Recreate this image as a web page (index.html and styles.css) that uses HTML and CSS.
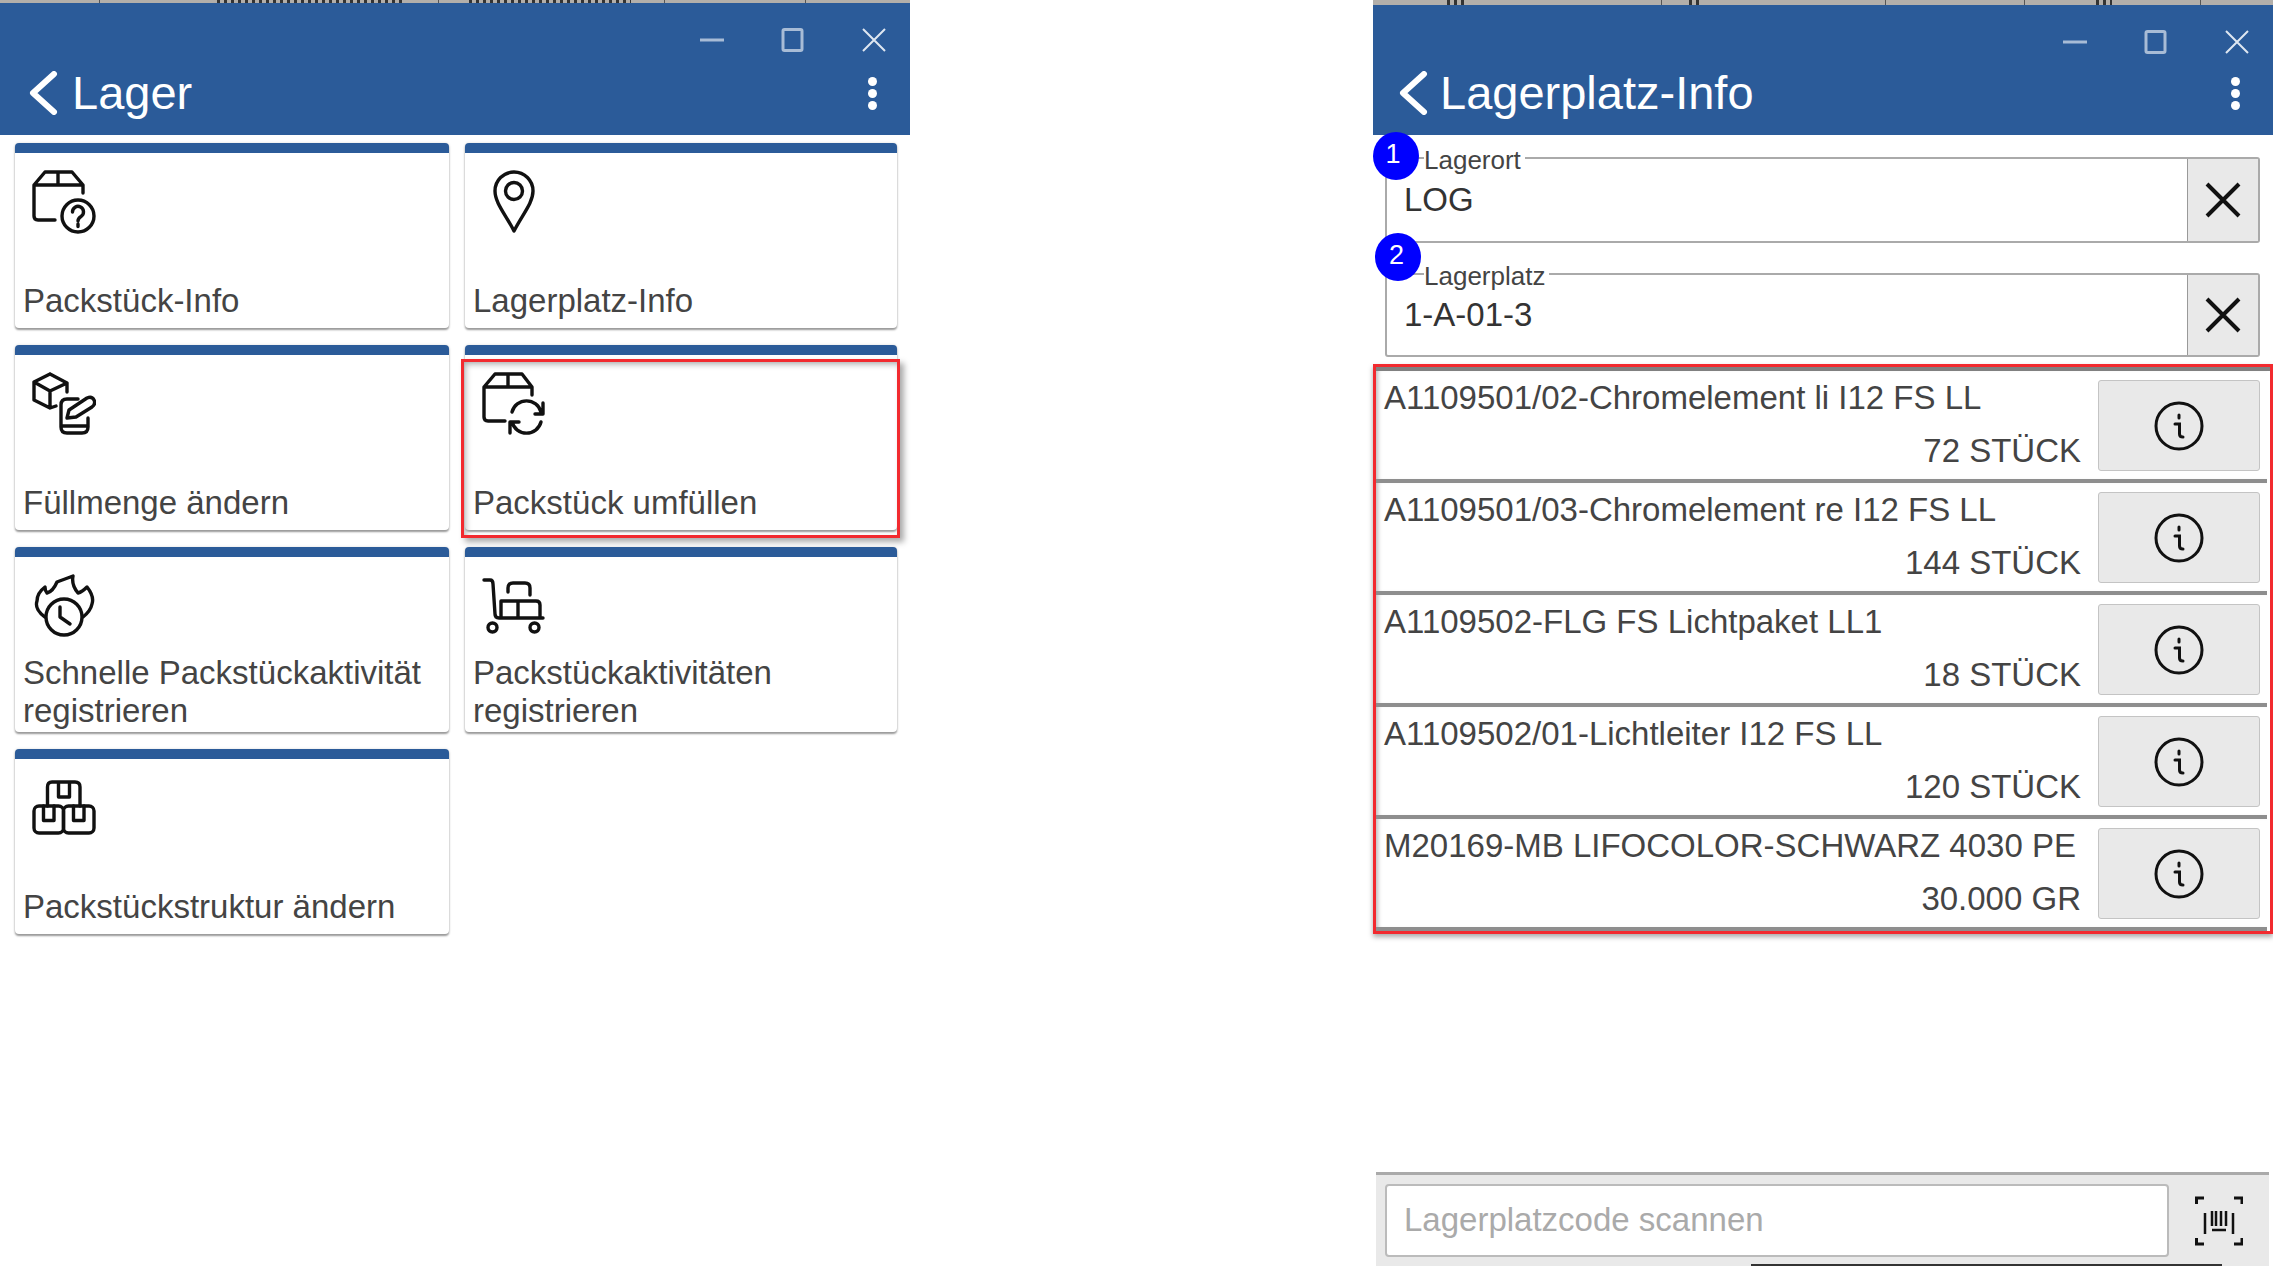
FILE: index.html
```html
<!DOCTYPE html>
<html lang="de">
<head>
    <meta charset="UTF-8">
    <title>Lager</title>
    <link rel="stylesheet" href="styles.css">
</head>
<body>
    <!-- linkes Fenster: Lager -->
    <section class="panel panel_left">
        <header class="head">
            <div class="strip">
                <div class="strip_cell w100"></div>
                <div class="strip_cell w339"><span class="frag f1"></span></div>
                <div class="strip_cell w226"><span class="frag f2"></span></div>
                <div class="strip_cell w141"></div>
            </div>
            <div class="win_btns">
                <span class="win_btn"><svg width="24" height="24" viewBox="0 0 24 24"><path d="M0 12H24" class="dim"/></svg></span>
                <span class="win_btn"><svg width="24" height="24" viewBox="0 0 24 24"><rect x="2" y="1.5" width="19" height="21" rx="1.5" class="dim"/></svg></span>
                <span class="win_btn"><svg width="24" height="24" viewBox="0 0 24 24"><path d="M1 1L23 23M23 1L1 23" class="thin"/></svg></span>
            </div>
            <div class="title_row">
                <svg class="back" width="30" height="44" viewBox="0 0 30 44"><path d="M26 3L5 22L26 41"/></svg>
                <h1>Lager</h1>
                <span class="dots"><i></i><i></i><i></i></span>
            </div>
        </header>

        <div class="tiles">
            <a class="tile">
                <svg class="ico" width="64" height="64" viewBox="0 0 64 64"><path d="M23 50H6Q2 50 2 46V15L13 2H40L51 15V23M2 15H51M26 2V15"/><circle cx="46" cy="46" r="16"/><path d="M40.500 42A5.500 5.500 0 1 1 49 46.500C47 47.700 46 48.500 46 51M46 54V56.500"/></svg>
                <span class="tile_txt one">Packstück-Info</span>
            </a>
            <a class="tile">
                <svg class="ico" width="64" height="64" viewBox="0 0 64 64"><path d="M32 61C24 45 13 33 13 21A19 19 0 0 1 51 21C51 33 40 45 32 61Z"/><circle cx="32" cy="21" r="8.500"/></svg>
                <span class="tile_txt one">Lagerplatz-Info</span>
            </a>
            <a class="tile">
                <svg class="ico" width="64" height="64" viewBox="0 0 64 64"><path d="M18 2L35 11V20M18 2L2 10V28L18 36L24 34M2 10L18 19L35 11M18 19V36"/><path d="M46 27H35Q29 27 29 33V55Q29 61 35 61H50Q56 61 56 55V46M29 54H56"/><path d="M35 46L37 38L55 26Q60 24 62 28Q64 32 60 35L44 45Z"/></svg>
                <span class="tile_txt one">Füllmenge ändern</span>
            </a>
            <a class="tile">
                <svg class="ico" width="64" height="64" viewBox="0 0 64 64"><path d="M23 49H6Q2 49 2 45V15L13 2H40L50 15V23M2 15H50M26 2V15"/><path d="M30 40A15 15 0 0 1 59 40M61 31V42H53M59 50A15 15 0 0 1 30 50M28 61V50H37"/></svg>
                <span class="tile_txt one">Packstück umfüllen</span>
                <span class="red_box"></span>
            </a>
            <a class="tile">
                <svg class="ico" width="64" height="64" viewBox="0 0 64 64"><path d="M13 43C7 39 3 33 5 27C5 21 9 16 13 13C13 16 14 18 15 19C19 18 22 15 25 8C30 6 36 4 41 2C40 7 41 13 46 19C50 18 53 15 55 13C59 18 62 24 60 30C59 35 56 39 51 43"/><circle cx="32" cy="43" r="18"/><path d="M28 33V43L38 50"/></svg>
                <span class="tile_txt">Schnelle Packstückaktivität registrieren</span>
            </a>
            <a class="tile">
                <svg class="ico" width="64" height="64" viewBox="0 0 64 64"><path d="M2 6H8Q11 6 11 10L13 40Q13 44 17 44H61"/><circle cx="10.500" cy="53.500" r="4.500"/><circle cx="52.500" cy="53.500" r="4.500"/><path d="M19 43V27H36V43M36 27H54Q58 27 58 31V43M26 18V14Q26 9 31 9H43Q48 9 48 14V21"/></svg>
                <span class="tile_txt">Packstückaktivitäten registrieren</span>
            </a>
            <a class="tile">
                <svg class="ico" width="64" height="64" viewBox="0 0 64 64"><path d="M15.500 30V11Q15.500 6 20 6H43Q48 6 48 11V30M26.500 6V21H37.500V6"/><rect x="2" y="30" width="29.500" height="27" rx="5"/><rect x="31.500" y="30" width="30.500" height="27" rx="5"/><path d="M11.500 30V44.500H22V30M41.500 30V44.500H52V30"/></svg>
                <span class="tile_txt one">Packstückstruktur ändern</span>
            </a>
        </div>
    </section>

    <!-- rechtes Fenster: Lagerplatz-Info -->
    <section class="panel panel_right">
        <header class="head">
            <div class="strip strip_high">
                <div class="strip_cell w289"><span class="frag f3"></span></div>
                <div class="strip_cell w224"><span class="frag f4"></span></div>
                <div class="strip_cell w139"></div>
                <div class="strip_cell w176"><span class="frag f5"></span></div>
            </div>
            <div class="win_btns">
                <span class="win_btn"><svg width="24" height="24" viewBox="0 0 24 24"><path d="M0 12H24" class="dim"/></svg></span>
                <span class="win_btn"><svg width="24" height="24" viewBox="0 0 24 24"><rect x="2" y="1.500" width="19" height="21" rx="1.500" class="dim"/></svg></span>
                <span class="win_btn"><svg width="24" height="24" viewBox="0 0 24 24"><path d="M1 1L23 23M23 1L1 23" class="thin"/></svg></span>
            </div>
            <div class="title_row">
                <svg class="back" width="30" height="44" viewBox="0 0 30 44"><path d="M26 3L5 22L26 41"/></svg>
                <h1>Lagerplatz-Info</h1>
                <span class="dots"><i></i><i></i><i></i></span>
            </div>
        </header>

        <div class="field field_first">
            <span class="badge">1</span>
            <label>Lagerort</label>
            <div class="value">LOG</div>
            <button class="clear"><svg width="36" height="36" viewBox="0 0 36 36"><path d="M2 2L34 34M34 2L2 34"/></svg></button>
        </div>
        <div class="field field_second">
            <span class="badge badge_two">2</span>
            <label>Lagerplatz</label>
            <div class="value">1-A-01-3</div>
            <button class="clear"><svg width="36" height="36" viewBox="0 0 36 36"><path d="M2 2L34 34M34 2L2 34"/></svg></button>
        </div>

        <ul class="stock">
            <li>
                <div class="stock_txt"><p>A1109501/02-Chromelement li I12 FS LL</p><p class="qty">72 STÜCK</p></div>
                <button class="info"><svg width="50" height="50" viewBox="0 0 50 50"><circle cx="25" cy="25" r="23"/><path d="M25 14V17M21 23H25.500V33Q25.500 36 29 36"/></svg></button>
            </li>
            <li>
                <div class="stock_txt"><p>A1109501/03-Chromelement re I12 FS LL</p><p class="qty">144 STÜCK</p></div>
                <button class="info"><svg width="50" height="50" viewBox="0 0 50 50"><circle cx="25" cy="25" r="23"/><path d="M25 14V17M21 23H25.500V33Q25.500 36 29 36"/></svg></button>
            </li>
            <li>
                <div class="stock_txt"><p>A1109502-FLG FS Lichtpaket LL1</p><p class="qty">18 STÜCK</p></div>
                <button class="info"><svg width="50" height="50" viewBox="0 0 50 50"><circle cx="25" cy="25" r="23"/><path d="M25 14V17M21 23H25.500V33Q25.500 36 29 36"/></svg></button>
            </li>
            <li>
                <div class="stock_txt"><p>A1109502/01-Lichtleiter I12 FS LL</p><p class="qty">120 STÜCK</p></div>
                <button class="info"><svg width="50" height="50" viewBox="0 0 50 50"><circle cx="25" cy="25" r="23"/><path d="M25 14V17M21 23H25.500V33Q25.500 36 29 36"/></svg></button>
            </li>
            <li>
                <div class="stock_txt"><p>M20169-MB LIFOCOLOR-SCHWARZ 4030 PE</p><p class="qty">30.000 GR</p></div>
                <button class="info"><svg width="50" height="50" viewBox="0 0 50 50"><circle cx="25" cy="25" r="23"/><path d="M25 14V17M21 23H25.500V33Q25.500 36 29 36"/></svg></button>
            </li>
        </ul>

        <footer class="scan">
            <div class="scan_input">Lagerplatzcode scannen</div>
            <svg class="scan_ico" width="48" height="50" viewBox="0 0 48 50"><path class="corner" d="M1.500 8V2H9M39 2H47V8M1.500 42V48H9M39 48H47V42"/><path class="bars" d="M10 17V38M38 17V38M17 15V30M21 15V30M26 15V30M31 15V30M17 34H31"/></svg>
        </footer>
        <div class="under_strip"></div>
    </section>
</body>
</html>
```

FILE: styles.css
```css
*{margin: 0;padding: 0;box-sizing: border-box;}

html,body{height: 100%;}

body{
    display: flex;
    justify-content: space-between;
    overflow: hidden;
    background: #fff;
    font-family: "Liberation Sans", Arial, sans-serif;
    color: #444;
}

.panel{display: flex;flex-direction: column;height: 1266px;}
.panel_left{width: 910px;}
.panel_right{width: 900px;}

/* Kopf */
.head{
    display: flex;
    flex-direction: column;
    height: 135px;
    background: #2b5b99;
    color: #fff;
}

.strip{
    display: flex;
    flex: none;
    height: 3px;
    overflow: hidden;
    background: #b3afaa;
}
.strip_high{height: 5px;}
.strip_cell{height: 100%;border-right: 1px solid #555;}
.w100{width: 100px;}
.w339{width: 339px;}
.w226{width: 226px;}
.w141{width: 141px;}
.w289{width: 289px;}
.w224{width: 224px;}
.w139{width: 139px;}
.w176{width: 176px;}

/* abgeschnittene Reste vom Fenster dahinter */
.frag{
    display: block;
    height: 100%;
    background: repeating-linear-gradient(90deg, #333 0 3px, transparent 3px 7px);
}
.f1{width: 188px;margin-left: 117px;}
.f2{width: 162px;margin-left: 30px;}
.f3{width: 18px;margin-left: 74px;}
.f4{width: 11px;margin-left: 27px;}
.f5{width: 16px;margin-left: 71px;}

.win_btns{display: flex;justify-content: flex-end;gap: 9px;padding-top: 25px;}
.win_btn{display: flex;justify-content: center;width: 72px;height: 24px;}
.win_btn svg{fill: none;}
.win_btn .dim{stroke: #a8bcd6;stroke-width: 3;}
.win_btn .thin{stroke: #dfe7f1;stroke-width: 2;}

.title_row{
    display: flex;
    align-items: center;
    margin-top: auto;
    padding: 0 33px 14px 30px;
}
.panel_right .title_row{padding-left: 25px;}
.back{flex: none;margin-right: 12px;fill: none;stroke: #fff;stroke-width: 6;stroke-linecap: round;stroke-linejoin: round;}
.panel_left .back{margin-left: -2px;margin-right: 14px;}
.title_row h1{flex: 1;font-size: 47px;line-height: 56px;font-weight: 400;}
.dots{display: flex;flex-direction: column;gap: 3px;}
.dots i{display: block;width: 9px;height: 9px;border-radius: 50%;background: #fff;}

/* Kacheln */
.tiles{
    display: grid;
    grid-template-columns: 434px 432px;
    grid-auto-rows: 185px;
    gap: 17px 16px;
    padding: 8px 0 0 15px;
}
.tile{
    position: relative;
    display: flex;
    flex-direction: column;
    justify-content: space-between;
    padding: 0 8px 2px;
    background: #fff;
    border-top: 10px solid #2b5b99;
    border-radius: 4px;
    box-shadow: 0 2px 2px #999, 0 0 3px #ddd;
}
.ico{flex: none;margin: 17px 0 0 9px;fill: none;stroke: #111;stroke-width: 3.400;stroke-linecap: round;stroke-linejoin: round;}
.tile_txt{font-size: 33px;line-height: 38px;color: #444;}
.tile_txt.one{padding-bottom: 6px;}
.red_box{
    position: absolute;
    left: -4px;
    right: -3px;
    top: 4px;
    bottom: -8px;
    border: 3px solid #f22a2f;
    box-shadow: 4px 4px 6px #aaa, inset 0 6px 6px -4px #aaa, inset 6px 0 6px -4px #bbb;
    pointer-events: none;
}

/* Felder */
.field{
    position: relative;
    display: flex;
    margin: 0 13px 0 12px;
    border: 2px solid #aaa;
    border-radius: 3px;
}
.field_first{height: 86px;margin-top: 22px;}
.field_second{height: 84px;margin-top: 30px;}
.field label{
    position: absolute;
    top: -13px;
    left: 37px;
    padding-right: 4px;
    background: #fff;
    font-size: 26px;
    line-height: 28px;
    color: #444;
}
.badge{
    position: absolute;
    top: -27px;
    left: -14px;
    z-index: 1;
    display: flex;
    justify-content: center;
    align-items: center;
    width: 46px;
    height: 48px;
    padding: 0 6px 3px 0;
    border-radius: 50%;
    background: #00f;
    color: #fff;
    font-size: 27px;
}
.badge_two{top: -42px;left: -12px;padding-right: 3px;}
.value{flex: 1;padding: 20px 0 0 17px;font-size: 33px;line-height: 40px;color: #333;}
.field_first .value{padding-top: 21px;}
.clear{
    display: flex;
    justify-content: center;
    align-items: center;
    width: 71px;
    border: 0;
    border-left: 1px solid #999;
    background: #e9e9e9;
}
.clear svg{fill: none;stroke: #111;stroke-width: 4;}

/* Liste */
.stock{
    flex: none;
    height: 570px;
    margin-top: 7px;
    border: 3px solid #f22a2f;
    list-style: none;
    box-shadow: 0 3px 5px #aaa;
}
.stock::before{content: "";display: block;height: 4px;background: #808080;}
.stock li{
    display: flex;
    height: 112px;
    border-bottom: 4px solid #8e8e8e;
    margin-right: 3px;
    padding: 9px 7px 0 8px;
    box-shadow: inset 5px 0 4px -3px #bbb;
}
.stock_txt{flex: 1;padding-right: 17px;font-size: 33px;line-height: 36px;color: #444;white-space: nowrap;}
.stock_txt p{height: 40px;}
.qty{margin-top: 8px;padding-top: 5px;text-align: right;}
.info{
    display: flex;
    flex: none;
    justify-content: center;
    align-items: center;
    width: 162px;
    height: 91px;
    background: #e9e9e9;
    border: 1px solid #c4c4c4;
    border-radius: 3px;
}
.info svg{fill: none;stroke: #111;stroke-width: 3;stroke-linecap: round;}

/* Scanner */
.scan{
    display: flex;
    align-items: center;
    flex: none;
    height: 94px;
    margin: auto 4px 0 3px;
    padding: 0 26px 0 9px;
    background: #e9e9e9;
    border-top: 3px solid #aaa;
}
.scan_input{
    flex: 1;
    height: 73px;
    padding: 0 17px;
    background: #fff;
    border: 2px solid #bbb;
    border-radius: 4px;
    font-size: 33px;
    line-height: 67px;
    color: #aaa;
}
.scan_ico{flex: none;margin-left: 26px;fill: none;stroke: #111;stroke-width: 3;}
.scan_ico .bars{stroke-width: 2.500;}
.under_strip{height: 2px;margin: -2px 51px 0 378px;background: #333;}
```
